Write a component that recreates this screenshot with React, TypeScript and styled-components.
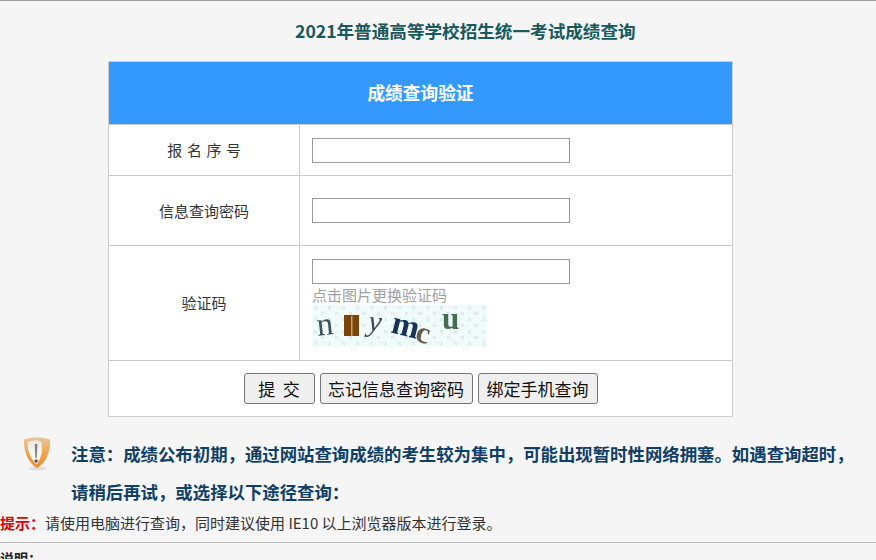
import React from "react";
import styled, { createGlobalStyle } from "styled-components";

const CJK = `"Noto Sans CJK SC", "Noto Sans", sans-serif`;

const Global = createGlobalStyle`
  html, body { margin: 0; padding: 0; height: 560px; overflow: hidden; background: #f5f5f5; }
  body { font-family: ${CJK}; color: #333; }
`;

const Page = styled.div`
  border-top: 1px solid #a0a0a0;
  height: 559px;
  overflow: hidden;
  box-sizing: border-box;
`;

const Title = styled.h1`
  margin: 0;
  padding: 18px 0 0 295px;
  height: 42px;
  font-size: 17.6px;
  line-height: 24px;
  font-weight: 700;
  color: #17595c;
  white-space: nowrap;
`;

const Table = styled.table`
  margin-left: 108px;
  width: 625px;
  table-layout: fixed;
  border-collapse: collapse;
  background: #fff;
  border: 1px solid #ccc;
`;

const Head = styled.th`
  box-sizing: border-box;
  height: 63px;
  padding: 0 0 3px;
  background: #3399ff;
  color: #fff;
  font-size: 17.7px;
  font-weight: 700;
  text-align: center;
  border: 1px solid #ccc;
`;

const Row = styled.tr<{ $h: number }>`
  height: ${(p) => p.$h}px;
`;

const Label = styled.td<{ $spread?: boolean }>`
  width: 190px;
  padding: 0 0 1px ${(p) => (p.$spread ? "5px" : "0")};
  border: 1px solid #ccc;
  text-align: center;
  font-size: 15px;
  color: #333;
  letter-spacing: ${(p) => (p.$spread ? "4.6px" : "0")};
`;

const Field = styled.td`
  padding: 0 0 0 12px;
  border: 1px solid #ccc;
  vertical-align: middle;
`;

const Input = styled.input`
  display: block;
  width: 258px;
  height: 25px;
  padding: 0 4px;
  box-sizing: border-box;
  background: #fff;
  border: 1px solid #999;
  border-radius: 0;
  outline: none;
`;

const Hint = styled.div`
  font-size: 15px;
  line-height: 21px;
  color: #a0a0a0;
`;

const Captcha = styled.svg`
  display: block;
  width: 175px;
  height: 42px;
`;

const Actions = styled.td`
  padding: 0;
  border: 1px solid #ccc;
  text-align: center;
`;

const ActionRow = styled.div`
  display: flex;
  justify-content: center;
  gap: 5px;
`;

const Button = styled.button<{ $w: number }>`
  width: ${(p) => p.$w}px;
  height: 31px;
  padding: 0;
  box-sizing: border-box;
  font-family: ${CJK};
  font-size: 17px;
  line-height: 20px;
  color: #111;
  background: #efefef;
  border: 1px solid #767676;
  border-radius: 3px;
  white-space: pre;
`;

const Notice = styled.div`
  display: flex;
  margin-top: 18px;
`;

const Shield = styled.svg`
  flex: none;
  width: 30px;
  height: 36px;
  margin: 1px 19px 0 22px;
`;

const NoticeText = styled.p`
  margin: 0;
  width: 796px;
  font-size: 17.4px;
  line-height: 38px;
  font-weight: 700;
  color: #0f3f66;
`;

const Tip = styled.p`
  margin: 0;
  font-size: 15px;
  line-height: 24px;
  color: #333;
  white-space: nowrap;
`;

const TipLabel = styled.strong`
  color: #e00000;
  font-weight: 700;
`;

const Rule = styled.hr`
  margin: 7px 0 0;
  border: 0;
  border-top: 1px solid #bbb;
`;

const Section = styled.div`
  margin-top: 5px;
  font-size: 14px;
  line-height: 20px;
  font-weight: 700;
  color: #222;
`;

function CaptchaImage() {
  return (
    <Captcha viewBox="0 0 175 42">
      <defs>
        <pattern id="dots" width="14" height="12" patternUnits="userSpaceOnUse">
          <rect width="14" height="12" fill="#f2fbfb" />
          <path
            d="M2 1l3 3M5 1l-3 3M9 7l3 3M12 7l-3 3"
            stroke="#c6e6df"
            strokeWidth="1"
          />
        </pattern>
        <filter id="soft">
          <feGaussianBlur stdDeviation="0.35" />
        </filter>
      </defs>
      <rect width="175" height="42" fill="url(#dots)" />
      <g fontFamily="'Liberation Serif', serif" filter="url(#soft)">
        <text x="5" y="30" fontSize="33" fill="#3c4f63" transform="rotate(-6 12 24)">n</text>
        <rect x="32" y="10" width="15" height="21" fill="#7a4408" />
        <rect x="39" y="11" width="1.5" height="20" fill="#c9a06a" />
        <text x="56" y="26" fontSize="30" fontStyle="italic" fill="#43405e" transform="rotate(6 60 20)">y</text>
        <text x="79" y="30" fontSize="33" fontWeight="700" fill="#12305a" transform="rotate(14 90 24)">m</text>
        <text x="104" y="38" fontSize="31" fontWeight="700" fill="#6b5a48" transform="rotate(16 112 30)">c</text>
        <text x="130" y="24" fontSize="31" fontWeight="700" fill="#3f6e4f">u</text>
      </g>
    </Captcha>
  );
}

function ShieldIcon() {
  return (
    <Shield viewBox="0 0 30 36">
      <defs>
        <linearGradient id="rim" x1="0" y1="0" x2="0" y2="1">
          <stop offset="0" stopColor="#e8c79c" />
          <stop offset="0.55" stopColor="#f2a04a" />
          <stop offset="1" stopColor="#ee8a24" />
        </linearGradient>
        <linearGradient id="face" x1="0" y1="0" x2="0" y2="1">
          <stop offset="0" stopColor="#ece9e4" />
          <stop offset="1" stopColor="#ffffff" />
        </linearGradient>
      </defs>
      <ellipse cx="16" cy="32.5" rx="9" ry="1.8" fill="#dcdcdc" />
      <path d="M2 3.5C7 2 10 1.2 14.5 1.2S23 2 28 3.5C28.6 15 25 26 15 32 6 27 1.4 15 2 3.5Z" fill="url(#rim)" />
      <path d="M5.5 6C9 5 12 4.6 14 4.6c1 0 4 .3 5 .7C21.5 14 19.5 22 14.5 28.5 9 24 5.5 15 5.5 6Z" fill="url(#face)" />
      <path d="M12.8 8h2.6l-.6 14h-1.4Z" fill="#808080" />
      <circle cx="14.1" cy="25" r="1.7" fill="#555" />
    </Shield>
  );
}

export default function App() {
  return (
    <Page>
      <Global />
      <Title>2021年普通高等学校招生统一考试成绩查询</Title>
      <Table>
        <colgroup>
          <col width="191" />
          <col />
        </colgroup>
        <tbody>
          <tr>
            <Head colSpan={2}>成绩查询验证</Head>
          </tr>
          <Row $h={51}>
            <Label $spread>报名序号</Label>
            <Field><Input type="text" /></Field>
          </Row>
          <Row $h={70}>
            <Label>信息查询密码</Label>
            <Field><Input type="text" /></Field>
          </Row>
          <Row $h={115}>
            <Label>验证码</Label>
            <Field>
              <Input type="text" />
              <Hint>点击图片更换验证码</Hint>
              <CaptchaImage />
            </Field>
          </Row>
          <Row $h={56}>
            <Actions colSpan={2}>
              <ActionRow>
                <Button $w={71}>{"提  交"}</Button>
                <Button $w={153}>忘记信息查询密码</Button>
                <Button $w={120}>绑定手机查询</Button>
              </ActionRow>
            </Actions>
          </Row>
        </tbody>
      </Table>
      <Notice>
        <ShieldIcon />
        <NoticeText>
          注意：成绩公布初期，通过网站查询成绩的考生较为集中，可能出现暂时性网络拥塞。如遇查询超时，请稍后再试，或选择以下途径查询：
        </NoticeText>
      </Notice>
      <Tip>
        <TipLabel>提示：</TipLabel>请使用电脑进行查询，同时建议使用 IE10 以上浏览器版本进行登录。
      </Tip>
      <Rule />
      <Section>说明：</Section>
    </Page>
  );
}
